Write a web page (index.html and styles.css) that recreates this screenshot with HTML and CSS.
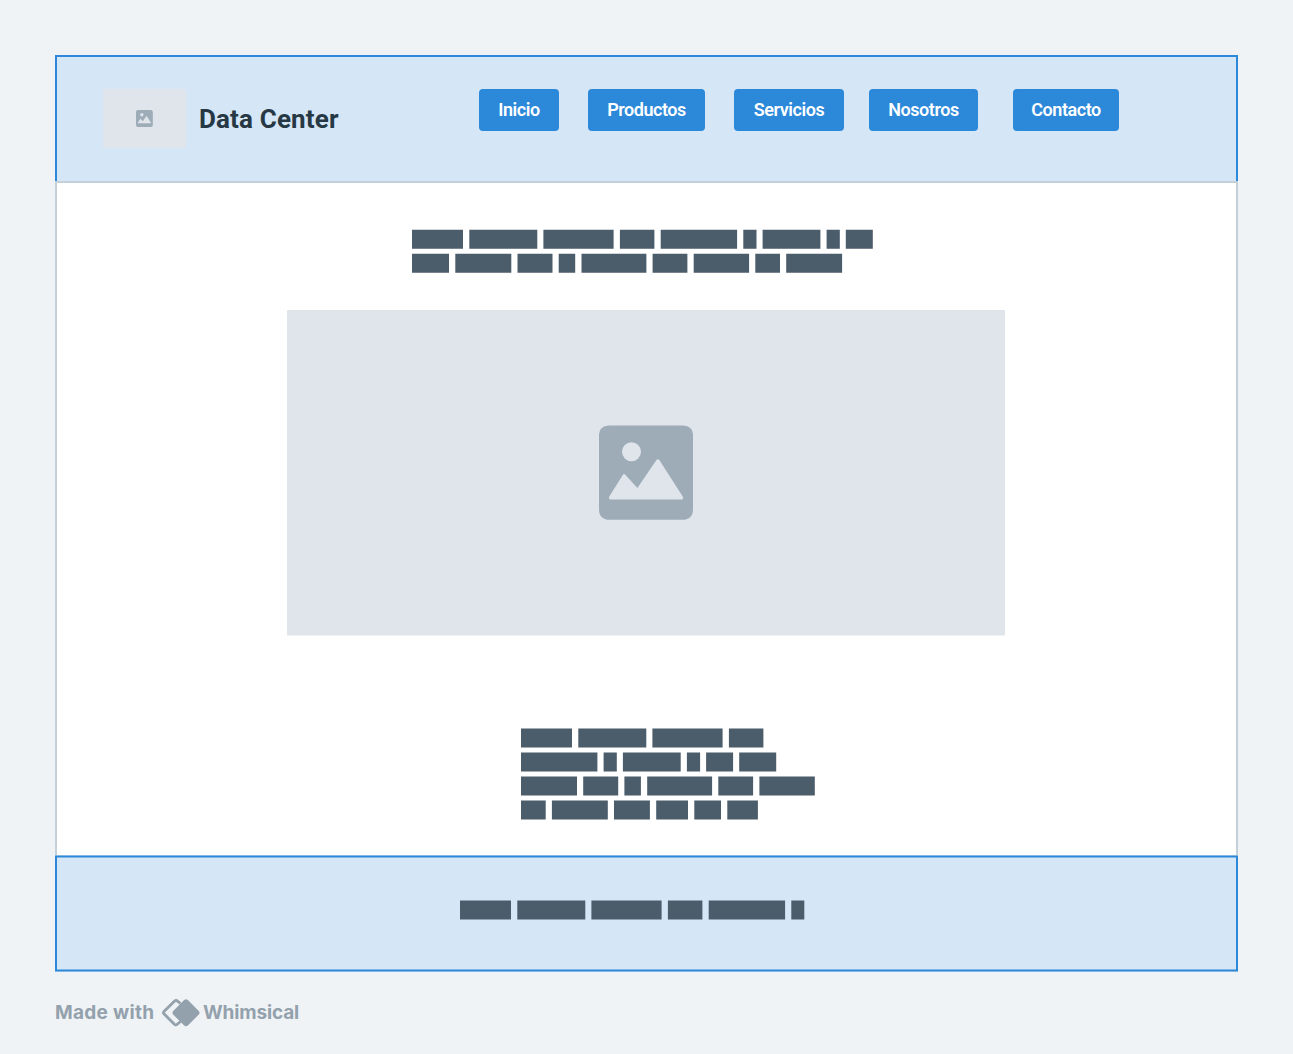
FILE: index.html
```html
<!DOCTYPE html>
<html lang="es">
<head>
<meta charset="utf-8">
<title>Data Center</title>
<link rel="stylesheet" href="styles.css">
</head>
<body>
<svg width="0" height="0" class="sprite" aria-hidden="true">
  <symbol id="image-icon" viewBox="0 0 95 95">
    <path fill="#9eacb8" d="M10.500 .5H83.500Q94 .5 94 11V84Q94 94.800 83.500 94.800H10.500Q0 94.800 0 84V11Q0 .5 10.500 .5Z"/>
    <circle cx="32.500" cy="26.700" r="9.500" fill="#e0e5ec"/>
    <path fill="#e0e5ec" d="M10.300 71.500 23.800 50Q25 48 26.500 50L38.400 63 57.300 35.300Q59 33 60.500 35.300L83.700 71.500Q84.800 74.600 82 74.600H12Q9.300 74.600 10.300 71.500Z"/>
  </symbol>
</svg>
<main class="frame">
  <header class="header">
    <div class="logo"><svg class="logo-icon"><use href="#image-icon"/></svg></div>
    <h1 class="brand">Data Center</h1>
    <nav class="nav">
      <a class="button inicio">Inicio</a>
      <a class="button productos">Productos</a>
      <a class="button servicios">Servicios</a>
      <a class="button nosotros">Nosotros</a>
      <a class="button contacto">Contacto</a>
    </nav>
  </header>
  <section class="content">
    <svg class="words intro" width="462" height="45" viewBox="0 0 462 45">
      <path d="M0 .8h51v19H0zM57.300 .8h68v19h-68zM131.400 .8h70.200v19h-70.200zM207.900 .8h34.500v19h-34.500zM248.700 .8h76.400v19h-76.400zM331.300 .8h13.200v19h-13.200zM350.600 .8h57.800v19h-57.800zM414.600 .8h13.200v19h-13.200zM433.800 .8h27v19h-27z"/>
      <path d="M0 24.800h37v19H0zM43.300 24.800h56v19h-56zM105.500 24.800h35v19h-35zM146.700 24.800h16.500v19h-16.500zM169.500 24.800h64.900v19h-64.900zM240.600 24.800h34.800v19h-34.800zM281.700 24.800h55.400v19h-55.400zM343.300 24.800h24.700v19h-24.700zM374.200 24.800h55.900v19h-55.900z"/>
    </svg>
    <div class="hero"><svg class="hero-icon"><use href="#image-icon"/></svg></div>
    <svg class="words details" width="295" height="93" viewBox="0 0 295 93">
      <path d="M0 .5h51v19H0zM57.300 .5h68v19h-68zM131.400 .5h70.200v19h-70.200zM207.900 .5h34.500v19h-34.500z"/>
      <path d="M0 24.500h76.400v19H0zM82.600 24.500h13.200v19h-13.200zM101.900 24.500h57.800v19h-57.800zM165.900 24.500h13.200v19h-13.200zM185.100 24.500h27v19h-27zM218.200 24.500h37v19h-37z"/>
      <path d="M0 48.500h56v19H0zM62.200 48.500h35v19h-35zM103.400 48.500h16.500v19h-16.500zM126.200 48.500h64.900v19h-64.900zM197.300 48.500h34.800v19h-34.800zM238.400 48.500h55.400v19h-55.400z"/>
      <path d="M0 72.500h24.700v19H0zM30.900 72.500h55.900v19h-55.900zM93 72.500h35.900v19h-35.900zM135.200 72.500h31.800v19h-31.800zM173.300 72.500h26.700v19h-26.700zM206.300 72.500h30.600v19h-30.600z"/>
    </svg>
  </section>
  <footer class="footer">
    <svg class="words" width="345" height="21" viewBox="0 0 345 21">
      <path d="M0 .5h51v19H0zM57.300 .5h68v19h-68zM131.400 .5h70.200v19h-70.200zM207.900 .5h34.500v19h-34.500zM248.700 .5h76.400v19h-76.400zM331.300 .5h13v19h-13z"/>
    </svg>
  </footer>
</main>
<div class="credit">
  <span class="made">Made with</span>
  <svg class="mark" width="38" height="28" viewBox="0 0 38 28">
    <path d="M18.500 4.500 15.200 1.900Q13.800 .8 12.400 2.200L2.200 12.300Q.8 13.700 2.200 15.100L12.400 25.300Q13.800 26.600 15.200 25.300L18.500 22.500" fill="none" stroke="#93a1ac" stroke-width="2.800"/>
    <path d="M22.100 1.100Q24 -.5 25.900 1.100L36.800 12Q38.400 13.800 36.800 15.600L25.900 26.500Q24 28.100 22.100 26.500L11.200 15.600Q9.600 13.800 11.200 12Z" fill="#93a1ac"/>
  </svg>
  <span class="name">Whimsical</span>
</div>
</body>
</html>
```
FILE: styles.css
```css
* { box-sizing: border-box; }

body {
  margin: 0;
  min-height: 1054px;
  padding: 55px;
  padding-bottom: 0;
  background: #f0f3f6;
  font-family: Roboto, "Liberation Sans", sans-serif;
}

svg { display: block; }
.sprite { position: absolute; }

.frame { width: 1183px; }

.header {
  display: flex;
  height: 126px;
  padding: 32px 0 0 46px;
  border: 2px solid #2c88d9;
  border-bottom: 0;
  background: #d5e6f6;
}

.logo {
  display: flex;
  flex: none;
  justify-content: center;
  width: 83px;
  height: 59px;
  padding-top: 21px;
  border-radius: 2px;
  background: #e0e5ec;
}
.logo-icon { width: 17px; height: 17px; }

.brand {
  flex: none;
  width: 293px;
  margin: 0;
  padding-left: 13px;
  color: #273845;
  font-size: 26px;
  font-weight: 700;
  line-height: 60px;
  letter-spacing: 0.15px;
  white-space: nowrap;
}

.nav { display: flex; align-items: flex-start; }

.button {
  height: 42px;
  border-radius: 4px;
  background: #2c88d9;
  color: #fff;
  font-size: 18px;
  font-weight: 600;
  line-height: 42px;
  letter-spacing: -0.45px;
  text-align: center;
}
.inicio { width: 80px; }
.productos { width: 117px; margin-left: 29px; }
.servicios { width: 110px; margin-left: 29px; }
.nosotros { width: 109px; margin-left: 25px; }
.contacto { width: 106px; margin-left: 35px; }

.content {
  height: 675px;
  padding-top: 46px;
  border: 2px solid #c3cfd9;
  border-bottom: 0;
  background: #fff;
}
.words { fill: #4b5c6b; }
.intro { margin-left: 355px; }

.hero {
  display: flex;
  width: 718px;
  height: 326px;
  margin: 36px 0 0 230px;
  padding: 115px 0 0 312px;
  border-bottom: 1px solid #f0f2f6;
  background: #e0e5ec;
}
.hero-icon { width: 95px; height: 95px; }
.details { margin: 92px 0 0 464px; }

.footer {
  height: 115px;
  padding: 43px 0 0 403px;
  border: solid #2c88d9;
  border-width: 1px 2px;
  background: #d5e6f6;
  box-shadow: 0 -1px #87b6df, inset 0 1px #80b7e7, 0 1px #80b7e7, inset 0 -1px #80b7e7;
}

.credit {
  display: flex;
  align-items: center;
  height: 28px;
  margin-top: 28px;
  color: #93a1ac;
  font-family: Inter, "Liberation Sans", sans-serif;
  font-size: 19px;
  font-weight: 700;
  line-height: 28px;
  white-space: nowrap;
}
.made { width: 107px; letter-spacing: 0.3px; }
.name { margin-left: 3px; letter-spacing: -0.15px; }
```
